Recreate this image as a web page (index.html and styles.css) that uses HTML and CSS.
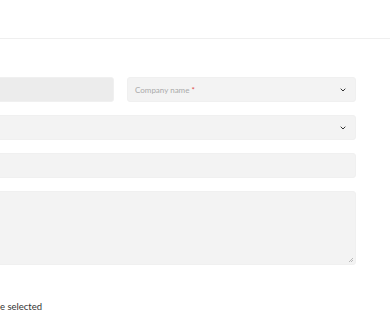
FILE: index.html
```html
<!DOCTYPE html>
<html lang="en">
<head>
    <meta charset="UTF-8">
    <meta name="viewport" content="width=device-width, initial-scale=1.0">
    <title>Contact</title>
    <link rel="stylesheet" href="styles.css">
</head>
<body>
    <header class="topbar"></header>

    <form class="contact-form">
        <div class="row">
            <div class="field field-disabled"></div>
            <div class="field field-select">
                <span class="placeholder">Company name <span class="req">*</span></span>
                <svg class="chevron" width="6" height="4" viewBox="0 0 6 4"><path d="M0.7 0.7 L3 3 L5.3 0.7" fill="none" stroke="#333" stroke-width="1"/></svg>
            </div>
        </div>
        <div class="field field-select">
            <span class="placeholder"></span>
            <svg class="chevron" width="6" height="4" viewBox="0 0 6 4"><path d="M0.7 0.7 L3 3 L5.3 0.7" fill="none" stroke="#333" stroke-width="1"/></svg>
        </div>
        <div class="field"></div>
        <div class="field field-area">
            <svg class="grip" width="6" height="6" viewBox="0 0 6 6"><path d="M5 1 L1 5 M5 3 L3 5" stroke="#aaa" stroke-width="0.8"/></svg>
        </div>
        <p class="file-note">e selected</p>
    </form>
</body>
</html>
```

FILE: styles.css
```css
* {
    margin: 0;
    padding: 0;
    box-sizing: border-box;
    font-family: 'Lato', 'Noto Sans', sans-serif;
}

body {
    width: 390px;
    height: 325px;
    background: #fff;
    overflow: hidden;
}

.topbar {
    height: 39px;
    border-bottom: 1px solid #efefef;
}

.contact-form {
    display: flex;
    flex-direction: column;
    gap: 13px;
    width: 471px;
    margin: 38px 0 0 -115px;
}

.row {
    display: flex;
    gap: 13px;
}

.row .field {
    flex: 1;
}

.field {
    position: relative;
    height: 25px;
    background: #f3f3f3;
    border: 1px solid #f0f0f0;
    border-radius: 3px;
    display: flex;
    align-items: center;
    padding: 0 9px 0 7px;
}

.field-disabled {
    background: #ececec;
}

.field-select {
    justify-content: space-between;
}

.placeholder {
    font-size: 8px;
    color: #aaa;
}

.req {
    color: #e0504a;
}

.field-area {
    height: 74px;
    align-items: flex-end;
    justify-content: flex-end;
    padding: 0 1px 1px 0;
}

.file-note {
    margin-top: 23px;
    margin-left: 115px;
    font-size: 9.5px;
    color: #333;
}
```
